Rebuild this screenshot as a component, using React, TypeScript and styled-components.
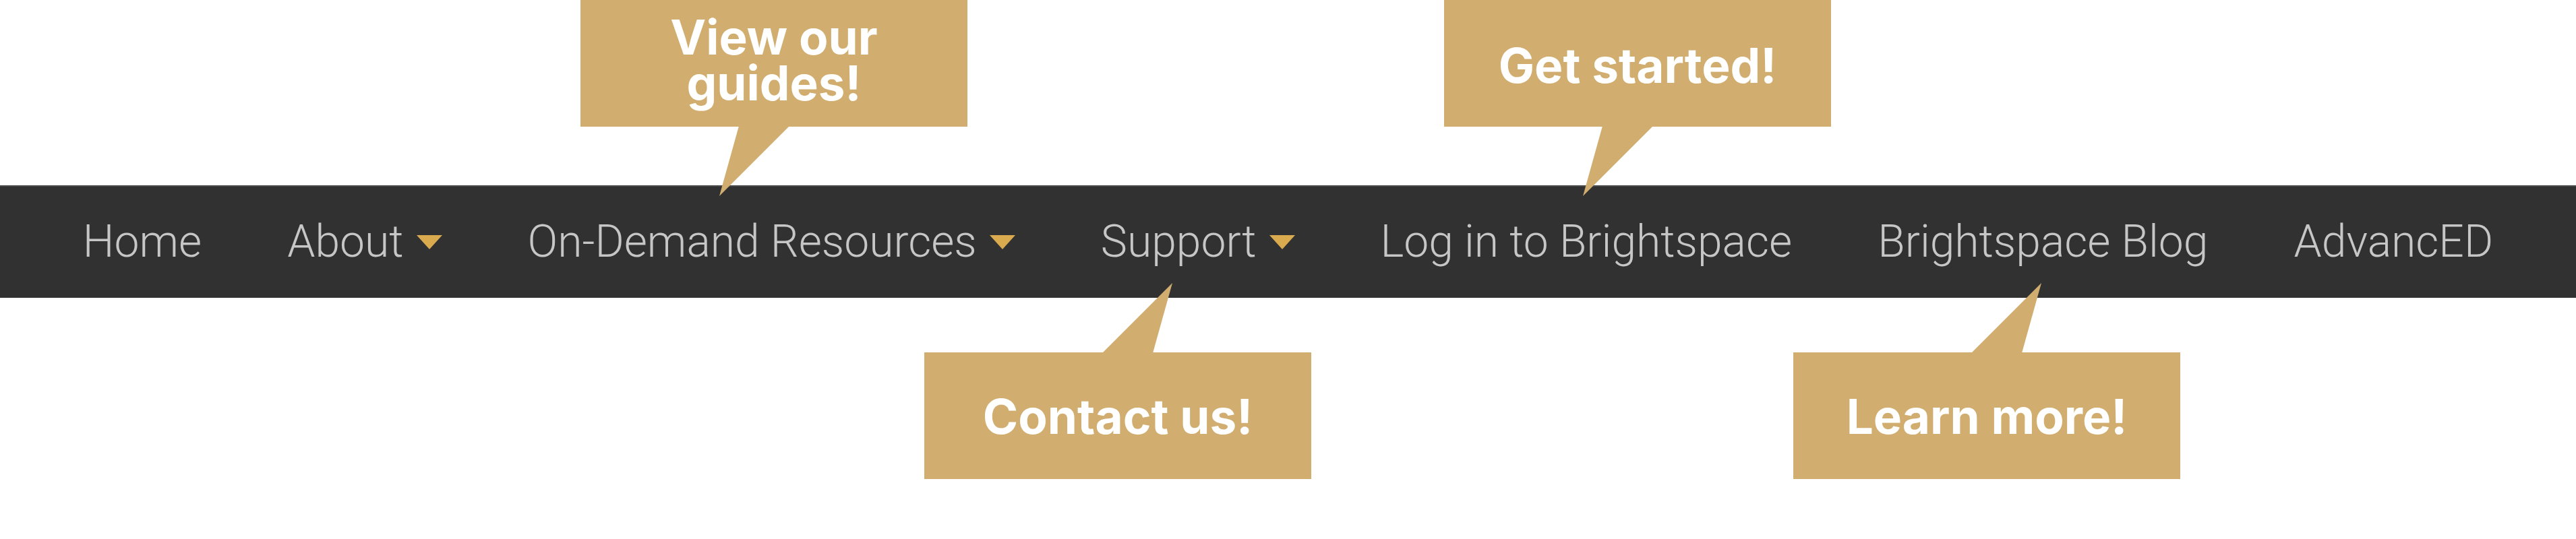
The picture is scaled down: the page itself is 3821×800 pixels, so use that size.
import React from "react";
import styled, { createGlobalStyle } from "styled-components";

const GlobalStyle = createGlobalStyle`
  html, body { margin: 0; padding: 0; background: #ffffff; }
  body { width: 3821px; height: 800px; overflow: hidden; }
`;

const GOLD = "#d1ae6f";

const Page = styled.div`
  display: flex;
  flex-direction: column;
  width: 3821px;
  height: 800px;
  background: #ffffff;
`;

const CalloutRow = styled.div<{ $pad: number; $gap: number; $top?: number; $height?: number }>`
  display: flex;
  align-items: flex-start;
  padding-left: ${(p) => p.$pad}px;
  gap: ${(p) => p.$gap}px;
  margin-top: ${(p) => p.$top ?? 0}px;
  height: ${(p) => (p.$height ? `${p.$height}px` : "auto")};
`;

const Callout = styled.div<{ $shift: number }>`
  position: relative;
  z-index: 2;
  width: 574px;
  height: 188px;
  box-sizing: border-box;
  background: ${GOLD};
  display: flex;
  align-items: center;
  justify-content: center;
  padding-top: ${(p) => Math.max(p.$shift, 0)}px;
  padding-bottom: ${(p) => Math.max(-p.$shift, 0)}px;
  font-family: Inter, "Liberation Sans", sans-serif;
  font-weight: 700;
  font-size: 71px;
  line-height: 68px;
  color: #ffffff;
  text-align: center;
`;

const Tail = styled.svg<{ $down: boolean }>`
  position: absolute;
  width: 104px;
  height: 104px;
  left: ${(p) => (p.$down ? 206 : 264)}px;
  ${(p) => (p.$down ? "top: 187px;" : "top: -103px;")}
  overflow: visible;
`;

const NavBar = styled.nav`
  display: flex;
  justify-content: center;
  align-items: center;
  gap: 127px;
  height: 167px;
  box-sizing: border-box;
  background: #313131;
  border-top: 2px solid #4a4a4a;
  padding-bottom: 2px;
`;

const NavItem = styled.div`
  display: flex;
  align-items: center;
  gap: 19px;
  font-family: Roboto, "Liberation Sans", sans-serif;
  font-weight: 300;
  font-size: 66px;
  color: #c6c6c6;
  white-space: nowrap;
`;

const Caret = styled.svg`
  width: 38px;
  height: 21px;
  flex: none;
  margin-top: 2px;
`;

type Bubble = { text: React.ReactNode; shift: number };

const TopTail = () => (
  <Tail $down viewBox="0 0 104 104">
    <polygon points="29,0 104,0 0,104" fill={GOLD} />
  </Tail>
);

const BottomTail = () => (
  <Tail $down={false} viewBox="0 0 104 104">
    <polygon points="0,104 75,104 104,0" fill={GOLD} />
  </Tail>
);

const navItems: { label: string; menu: boolean }[] = [
  { label: "Home", menu: false },
  { label: "About", menu: true },
  { label: "On-Demand Resources", menu: true },
  { label: "Support", menu: true },
  { label: "Log in to Brightspace", menu: false },
  { label: "Brightspace Blog", menu: false },
  { label: "AdvancED", menu: false },
];

const topBubbles: Bubble[] = [
  { text: (<>View our<br />guides!</>), shift: -10 },
  { text: "Get started!", shift: 6 },
];

const bottomBubbles: Bubble[] = [
  { text: "Contact us!", shift: 2 },
  { text: "Learn more!", shift: 2 },
];

export default function App() {
  return (
    <Page>
      <GlobalStyle />
      <CalloutRow $pad={861} $gap={707} $height={275}>
        {topBubbles.map((b, i) => (
          <Callout key={i} $shift={b.shift}>
            <span>{b.text}</span>
            <TopTail />
          </Callout>
        ))}
      </CalloutRow>
      <NavBar>
        {navItems.map((n) => (
          <NavItem key={n.label}>
            <span>{n.label}</span>
            {n.menu && (
              <Caret viewBox="0 0 38 21">
                <polygon points="0,0 38,0 19,21" fill="#d9aa4e" />
              </Caret>
            )}
          </NavItem>
        ))}
      </NavBar>
      <CalloutRow $pad={1371} $gap={715} $top={81}>
        {bottomBubbles.map((b, i) => (
          <Callout key={i} $shift={b.shift}>
            <span>{b.text}</span>
            <BottomTail />
          </Callout>
        ))}
      </CalloutRow>
    </Page>
  );
}
